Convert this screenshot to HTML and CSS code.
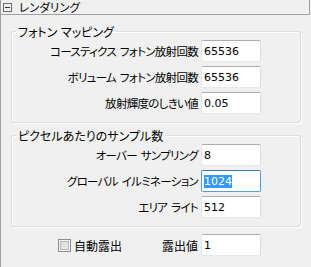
FILE: index.html
```html
<!DOCTYPE html>
<html lang="ja">
<head>
  <meta charset="UTF-8">
  <meta name="viewport" content="width=device-width, initial-scale=1.0">
  <title>レンダリング</title>
  <link rel="stylesheet" href="styles.css">
</head>
<body>
  <div class="panel">
    <div class="panel-head">
      <span class="toggle"></span>
      <span class="panel-title">レンダリング</span>
    </div>

    <fieldset class="group first">
      <legend>フォトン マッピング</legend>
      <div class="row">
        <label for="caustics">コースティクス フォトン放射回数</label>
        <input type="text" id="caustics" value="65536">
      </div>
      <div class="row">
        <label for="volume">ボリューム フォトン放射回数</label>
        <input type="text" id="volume" value="65536">
      </div>
      <div class="row">
        <label for="threshold">放射輝度のしきい値</label>
        <input type="text" id="threshold" value="0.05">
      </div>
    </fieldset>

    <fieldset class="group second">
      <legend>ピクセルあたりのサンプル数</legend>
      <div class="row">
        <label for="oversampling">オーバー サンプリング</label>
        <input type="text" id="oversampling" value="8">
      </div>
      <div class="row">
        <label for="gi">グローバル イルミネーション</label>
        <input type="text" id="gi" value="1024" class="focused">
      </div>
      <div class="row">
        <label for="area">エリア ライト</label>
        <input type="text" id="area" value="512">
      </div>
    </fieldset>

    <div class="row bottom">
      <div class="bottom-left">
        <label class="check"><input type="checkbox" id="autoexp"> 自動露出</label>
        <label for="exposure">露出値</label>
      </div>
      <input type="text" id="exposure" value="1">
    </div>
  </div>

  <script>
    var gi = document.getElementById('gi');
    gi.focus();
    gi.select();
  </script>
</body>
</html>
```

FILE: styles.css
```css
body {
  margin: 0;
  background-color: #f0f0f0;
  font-family: "Noto Sans CJK JP", sans-serif;
  font-size: 12px;
  font-feature-settings: "palt";
  color: #000;
}
.panel {
  width: 310px;
  height: 267px;
  border-left: 1px solid #a0a0a0;
  box-sizing: border-box;
}
.panel-head {
  height: 14px;
  border-bottom: 1px solid #a0a0a0;
  border-right: 1px solid #a0a0a0;
  display: flex;
  align-items: center;
}
.panel-title {
  line-height: 14px;
  font-size: 11.5px;
}
.toggle {
  width: 7px;
  height: 7px;
  border: 1px solid #6d6d6d;
  margin-left: 2px;
  margin-right: 7px;
  position: relative;
}
.toggle::after {
  content: "";
  position: absolute;
  left: 1px;
  top: 3px;
  width: 5px;
  height: 1px;
  background: #333;
}
.group {
  margin: 0 0 0 10px;
  width: 290px;
  box-sizing: border-box;
  padding: 2px 0 8px 0;
  border: 1px solid #d5dfe5;
  border-radius: 3px;
  box-shadow: inset 1px 1px 0 #fff, 1px 1px 0 #fff;
  display: flex;
  flex-direction: column;
  gap: 4px;
}
.group.first {
  margin-top: 10px;
}
.group.second {
  margin-top: 6px;
}
legend {
  padding: 0 2px;
  margin-left: 4px;
  line-height: 13px;
  height: 13px;
  word-spacing: 1px;
}
.row {
  display: grid;
  grid-template-columns: 186px 60px;
  column-gap: 3px;
  align-items: center;
}
.row label {
  text-align: right;
  white-space: nowrap;
}
.group .row label {
  font-size: 11.5px;
  letter-spacing: -0.7px;
  word-spacing: 2px;
}
input[type="text"] {
  width: 60px;
  height: 22px;
  box-sizing: border-box;
  margin: 0;
  padding: 0 2px;
  border: 1px solid #e3e9ef;
  border-top-color: #abadb3;
  border-left-color: #e2e3ea;
  border-right-color: #dbdfe6;
  border-radius: 2px;
  background: #fff;
  font-family: "DejaVu Sans", sans-serif;
  font-size: 11px;
  color: #000;
  outline: none;
}
input.focused {
  border-color: #569de5;
  border-top-color: #3d7bad;
}
input::selection {
  background: #3399ff;
  color: #fff;
}
.bottom {
  margin: 7px 0 0 11px;
}
.bottom-left {
  display: flex;
  justify-content: space-between;
  align-items: center;
}
.check {
  display: flex;
  align-items: center;
  margin-left: 46px;
}
.check input {
  appearance: none;
  width: 13px;
  height: 13px;
  margin: 0 3px 0 0;
  border: 1px solid #8e8f8f;
  background: linear-gradient(135deg, #d2d2d2, #f4f4f4);
  box-shadow: inset 0 0 0 1px #f4f4f4, inset 0 0 0 2px #b8b8b8;
}
```
